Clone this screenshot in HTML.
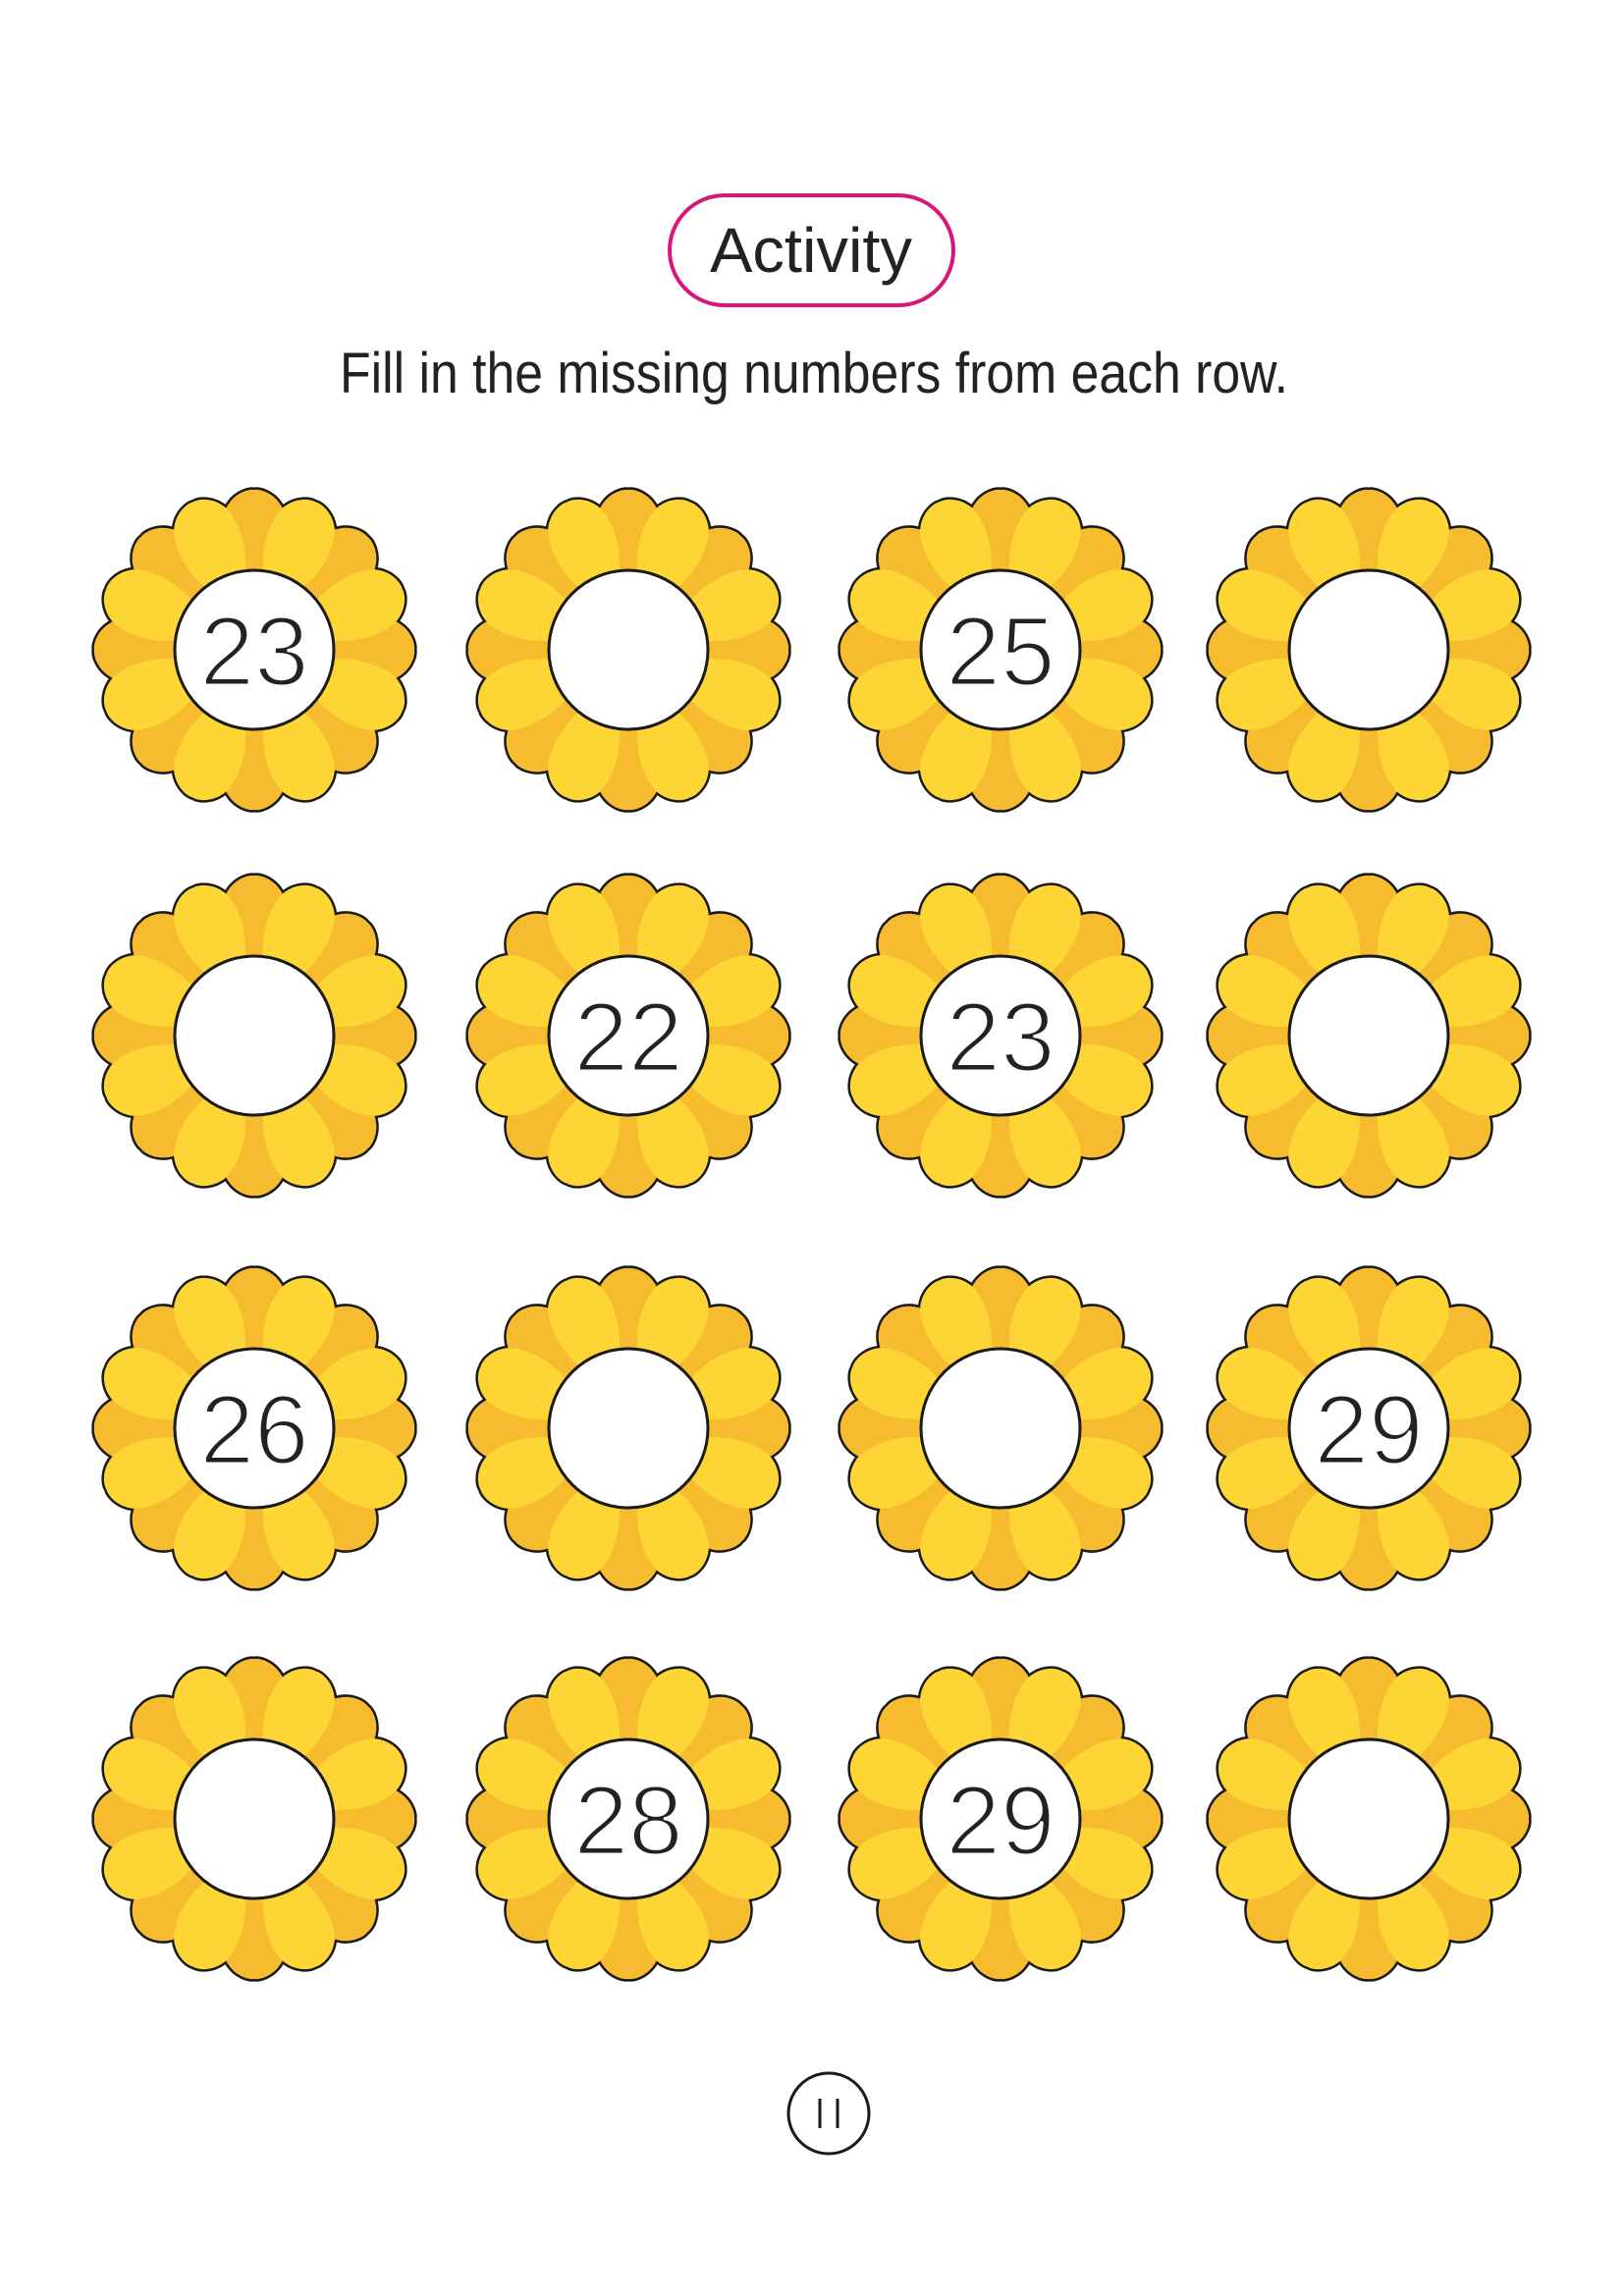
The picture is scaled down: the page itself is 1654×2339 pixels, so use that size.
<!DOCTYPE html>
<html><head><meta charset="utf-8"><style>
html,body{margin:0;padding:0;background:#fff;}
svg{display:block}
</style></head><body>
<svg width="1654" height="2339" viewBox="0 0 1654 2339" xmlns="http://www.w3.org/2000/svg">
<defs>
<path id="p" d="M0,-45 C-32,-80 -38,-120 -29,-144 C-21,-160 -6,-164 0,-163 C6,-164 21,-160 29,-144 C38,-120 32,-80 0,-45Z"/>
<g id="f">
  <g stroke="#1a1a1a" stroke-width="5" fill="none">
    <use href="#p"/><use href="#p" transform="rotate(22.5)"/><use href="#p" transform="rotate(45)"/><use href="#p" transform="rotate(67.5)"/>
    <use href="#p" transform="rotate(90)"/><use href="#p" transform="rotate(112.5)"/><use href="#p" transform="rotate(135)"/><use href="#p" transform="rotate(157.5)"/>
    <use href="#p" transform="rotate(180)"/><use href="#p" transform="rotate(202.5)"/><use href="#p" transform="rotate(225)"/><use href="#p" transform="rotate(247.5)"/>
    <use href="#p" transform="rotate(270)"/><use href="#p" transform="rotate(292.5)"/><use href="#p" transform="rotate(315)"/><use href="#p" transform="rotate(337.5)"/>
  </g>
  <circle r="112" fill="#f6bb2f"/>
  <g fill="#f6bb2f">
    <use href="#p"/><use href="#p" transform="rotate(45)"/><use href="#p" transform="rotate(90)"/><use href="#p" transform="rotate(135)"/>
    <use href="#p" transform="rotate(180)"/><use href="#p" transform="rotate(225)"/><use href="#p" transform="rotate(270)"/><use href="#p" transform="rotate(315)"/>
  </g>
  <g fill="#fdd636">
    <use href="#p" transform="rotate(22.5)"/><use href="#p" transform="rotate(67.5)"/><use href="#p" transform="rotate(112.5)"/><use href="#p" transform="rotate(157.5)"/>
    <use href="#p" transform="rotate(202.5)"/><use href="#p" transform="rotate(247.5)"/><use href="#p" transform="rotate(292.5)"/><use href="#p" transform="rotate(337.5)"/>
  </g>
  <circle r="81" fill="#fff" stroke="#1a1a1a" stroke-width="3"/>
</g>
</defs>

<rect x="682" y="199" width="289" height="112" rx="56" fill="#fff" stroke="#d8177a" stroke-width="4"/>
<text x="826" y="277" text-anchor="middle" font-family="Liberation Sans, sans-serif" font-size="64" fill="#222" textLength="206" lengthAdjust="spacingAndGlyphs">Activity</text>
<text x="346" y="400" font-family="Liberation Sans, sans-serif" font-size="58" fill="#222" textLength="966" lengthAdjust="spacingAndGlyphs">Fill in the missing numbers from each row.</text>

<use href="#f" x="259" y="662"/><use href="#f" x="640" y="662"/><use href="#f" x="1019" y="662"/><use href="#f" x="1394" y="662"/>
<use href="#f" x="259" y="1055"/><use href="#f" x="640" y="1055"/><use href="#f" x="1019" y="1055"/><use href="#f" x="1394" y="1055"/>
<use href="#f" x="259" y="1455"/><use href="#f" x="640" y="1455"/><use href="#f" x="1019" y="1455"/><use href="#f" x="1394" y="1455"/>
<use href="#f" x="259" y="1853"/><use href="#f" x="640" y="1853"/><use href="#f" x="1019" y="1853"/><use href="#f" x="1394" y="1853"/>
<g font-family="Liberation Sans, sans-serif" font-size="100" fill="#222" stroke="#fff" stroke-width="3" text-anchor="middle">
<text x="259" y="698">23</text>
<text x="1019" y="698">25</text>
<text x="640" y="1091">22</text>
<text x="1019" y="1091">23</text>
<text x="259" y="1491">26</text>
<text x="1394" y="1491">29</text>
<text x="640" y="1889">28</text>
<text x="1019" y="1889">29</text>
</g>

<circle cx="844" cy="2153" r="41" fill="#fff" stroke="#1a1a1a" stroke-width="3"/>
<line x1="835" y1="2138" x2="835" y2="2168" stroke="#1a1a1a" stroke-width="3"/>
<line x1="853" y1="2138" x2="853" y2="2168" stroke="#1a1a1a" stroke-width="3"/>
</svg>
</body></html>
